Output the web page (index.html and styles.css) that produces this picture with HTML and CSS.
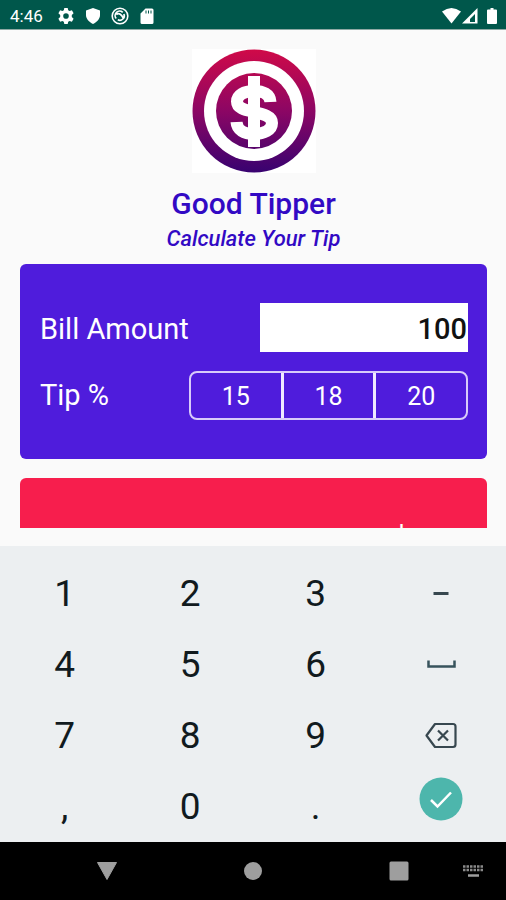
FILE: index.html
```html
<!DOCTYPE html>
<html lang="en">
<head>
<meta charset="utf-8">
<meta name="viewport" content="width=device-width, initial-scale=1">
<title>Good Tipper</title>
<link rel="stylesheet" href="styles.css">
</head>
<body>
<div class="status">
  <span class="clock">4:46</span>
  <svg class="status-icon" viewBox="0 0 18 18"><path d="M7.300 1h3.400l.5 2.300 1.400.8 2.300-.8 1.700 3-1.800 1.600v2.200l1.800 1.600-1.700 3-2.300-.8-1.400.8-.5 2.300H7.300l-.5-2.300-1.400-.8-2.300.8-1.700-3 1.800-1.600V7.900L1.400 6.300l1.700-3 2.300.8 1.400-.8zM9 6.200a2.800 2.800 0 1 0 0 5.600 2.800 2.800 0 0 0 0-5.600z" fill="#fff" fill-rule="evenodd"/></svg>
  <svg class="status-icon" viewBox="0 0 18 18"><path d="M9 1l7 2.600V8c0 4-3 7-7 9-4-2-7-5-7-9V3.600z" fill="#fff"/></svg>
  <svg class="status-icon" viewBox="0 0 18 18" fill="none" stroke="#fff"><circle cx="9" cy="9" r="7.800" stroke-width="1.600"/><path d="M5.200 11.500a4.500 4.500 0 0 1 6.500-6.200M12.900 7a4.500 4.500 0 0 1-6.100 5.800M5.300 7.500c3-2 5 0 7.500 4.500" stroke-width="1.700"/></svg>
  <svg class="status-icon" viewBox="0 0 18 18"><path d="M7.500 1.500H14A1.500 1.500 0 0 1 15.500 3v12.500A1.500 1.500 0 0 1 14 17H4a1.500 1.500 0 0 1-1.500-1.500V6.500z" fill="#fff"/><path d="M8 3.500v3M10.500 3.500v3M13 3.500v3" stroke="#00574b"/></svg>
  <svg class="signals" viewBox="0 0 56 18"><path d="M0 4.500Q9.500-2.500 19 4.500L9.500 16.500z" fill="#fff"/><path d="M35.500 1v15.500H20z" fill="#fff"/><path d="M33 7v8h-5V12z" fill="#00574b"/><path d="M46 2.500h2.500V1h3v1.500H54a1 1 0 0 1 1 1V16a1 1 0 0 1-1 1h-8a1 1 0 0 1-1-1V3.500a1 1 0 0 1 1-1z" fill="#fff"/></svg>
</div>
<main class="app">
  <header class="brand">
    <svg class="logo" viewBox="0 0 124 124" role="img" aria-label="Dollar coin">
      <defs><linearGradient id="coin" gradientUnits="userSpaceOnUse" x1="0" y1="0" x2="0" y2="124"><stop offset="0" stop-color="#d00a48"/><stop offset=".5" stop-color="#8c0664"/><stop offset="1" stop-color="#370270"/></linearGradient></defs>
      <circle cx="62" cy="62" r="61.500" fill="url(#coin)"/>
      <circle cx="62" cy="62" r="50" fill="#fff"/>
      <circle cx="62" cy="62" r="38" fill="url(#coin)"/>
      <path d="M62 27v71" stroke="#fff" stroke-width="12" fill="none"/>
      <path d="M78.500 53C78 45 71 42 62 42c-10 0-17 4-17 10.500 0 7 8 8.500 17 10.500s18 4 18 11-8 11-18 11-17-4-17.500-12" stroke="#fff" stroke-width="12" fill="none"/>
    </svg>
    <h1 class="title">Good Tipper</h1>
    <p class="subtitle">Calculate Your Tip</p>
  </header>
  <section class="card bill">
    <div class="row">
      <label for="amount">Bill Amount</label>
      <input id="amount" class="amount" type="text" inputmode="decimal" value="100">
    </div>
    <div class="row">
      <span id="tip-label">Tip %</span>
      <div class="segments" role="group" aria-labelledby="tip-label">
        <button type="button">15</button>
        <button type="button">18</button>
        <button type="button">20</button>
      </div>
    </div>
  </section>
  <section class="card result">
    <div class="row"><span>Tip Amount</span><span>$0.00</span></div>
  </section>
</main>
<div class="keypad">
  <button type="button">1</button>
  <button type="button">2</button>
  <button type="button">3</button>
  <button type="button" aria-label="Minus"><svg width="32" height="32" viewBox="0 0 32 32"><path d="M8.500 15.500h15" stroke="#37474f" stroke-width="3"/></svg></button>
  <button type="button">4</button>
  <button type="button">5</button>
  <button type="button">6</button>
  <button type="button" aria-label="Space"><svg width="32" height="32" viewBox="0 0 32 32" fill="none" stroke="#37535c" stroke-width="2.500"><path d="M3.500 11.500v6h26v-6"/></svg></button>
  <button type="button">7</button>
  <button type="button">8</button>
  <button type="button">9</button>
  <button type="button" aria-label="Backspace"><svg width="32" height="32" viewBox="0 0 32 32" fill="none" stroke="#37474f" stroke-width="2.200"><path d="M10 4h18a2.500 2.500 0 0 1 2.500 2.500v18A2.500 2.500 0 0 1 28 27H10L1.500 15.500z" stroke-linejoin="round"/><path d="M13 10.500l10 10m0-10l-10 10"/></svg></button>
  <button type="button">,</button>
  <button type="button">0</button>
  <button type="button">.</button>
  <button type="button" class="done" aria-label="Done"><svg width="44" height="44" viewBox="0 0 44 44"><circle cx="22" cy="22" r="21.500" fill="#4db6ac"/><path d="M12 23l6.500 6.500L32 15.500" fill="none" stroke="#fff" stroke-width="2.500"/></svg></button>
</div>
<nav class="nav">
  <button type="button" aria-label="Back"><svg width="22" height="20" viewBox="0 0 22 20"><path d="M1.500 1.500h19L11 18.500z" fill="#9e9e9e" stroke="#9e9e9e" stroke-linejoin="round"/></svg></button>
  <button type="button" aria-label="Home"><svg width="20" height="20" viewBox="0 0 20 20"><circle cx="10" cy="10" r="9" fill="#9e9e9e"/></svg></button>
  <button type="button" aria-label="Recent apps"><svg width="20" height="20" viewBox="0 0 20 20"><rect x=".5" y=".5" width="19" height="19" rx="1.500" fill="#9e9e9e"/></svg></button>
  <button type="button" class="switcher" aria-label="Switch keyboard"><svg width="20" height="14" viewBox="0 0 20 14"><path d="M0 2.500h20M0 6h20" stroke="#8a8a8a" stroke-width="2.600" stroke-dasharray="2.500 1"/><path d="M5 11.500h11" stroke="#9e9e9e" stroke-width="2.500"/></svg></button>
</nav>
</body>
</html>
```
FILE: styles.css
```css
* {
  box-sizing: border-box;
}

body {
  margin: 0;
  height: 100vh;
  display: flex;
  flex-direction: column;
  background: #fafafa;
  font-family: Roboto, "Liberation Sans", sans-serif;
}

button {
  margin: 0;
  padding: 0;
  border: 0;
  background: none;
  color: inherit;
  font: inherit;
}

svg {
  display: block;
}

.status {
  flex: none;
  display: flex;
  align-items: center;
  height: 30px;
  padding: 2px 8px 0 10px;
  gap: 9px;
  background: #00574b;
  border-bottom: 1px solid #8fa9a4;
  color: #fff;
}

.clock {
  margin-right: 5px;
  font-size: 17px;
  line-height: 20px;
}

.status-icon {
  width: 18px;
  height: 18px;
}

.signals {
  width: 56px;
  height: 18px;
  margin-left: auto;
}

.app {
  flex: 1;
  min-height: 0;
  margin-bottom: 18px;
  padding: 19px 19px 0 20px;
  overflow: hidden;
}

.brand {
  text-align: center;
  color: #3209c4;
}

.logo {
  width: 124px;
  height: 124px;
  margin: 0 auto;
  background: #fff;
}

.title {
  margin: 12px 0 0;
  font-size: 30px;
  font-weight: 500;
  line-height: 38px;
}

.subtitle {
  margin: 0;
  padding: 2px 0 12px;
  font-size: 22px;
  font-style: italic;
  font-weight: 500;
  line-height: 27px;
}

.card {
  display: flex;
  flex-direction: column;
  gap: 19px;
  padding: 39px 19px 39px 20px;
  border-radius: 6px;
  color: #fff;
  font-size: 29px;
  line-height: 49px;
}

.card + .card {
  margin-top: 19px;
}

.bill {
  background: #4f1cdc;
}

.bill label {
  padding-top: 3px;
}

.result {
  padding-top: 36px;
  background: #f71e4d;
  font-size: 30px;
}

.row {
  display: flex;
  align-items: center;
  justify-content: space-between;
  height: 49px;
}

.amount {
  width: 208px;
  height: 49px;
  padding: 3px 1px 0 0;
  border: 0;
  background: #fff;
  color: #111;
  font: 500 29px/46px Roboto, "Liberation Sans", sans-serif;
  text-align: right;
}

.segments {
  display: flex;
  width: 279px;
  height: 49px;
  border: 2px solid #d8cbfa;
  border-radius: 8px;
  font-size: 25px;
  line-height: 47px;
}

.segments button {
  box-sizing: content-box;
  flex: 1 1 0;
  height: 45px;
}

.segments button + button {
  border-left: 3px solid #efe9ff;
}

.keypad {
  flex: none;
  display: grid;
  grid-template-columns: repeat(4, 1fr);
  grid-auto-rows: 71px;
  padding: 12px 2px 0;
  background: #eceff1;
  color: #111a1e;
  font-size: 37px;
}

.keypad button {
  display: flex;
  align-items: center;
  justify-content: center;
}

.keypad .done {
  padding-bottom: 15px;
}

.nav {
  flex: none;
  display: flex;
  height: 58px;
  padding-left: 34px;
  background: #000;
}

.nav button {
  flex: 1;
  display: flex;
  align-items: center;
  justify-content: center;
}

.nav .switcher {
  flex: none;
  width: 34px;
  justify-content: flex-start;
  margin-left: -9px;
  margin-right: 9px;
}
```
